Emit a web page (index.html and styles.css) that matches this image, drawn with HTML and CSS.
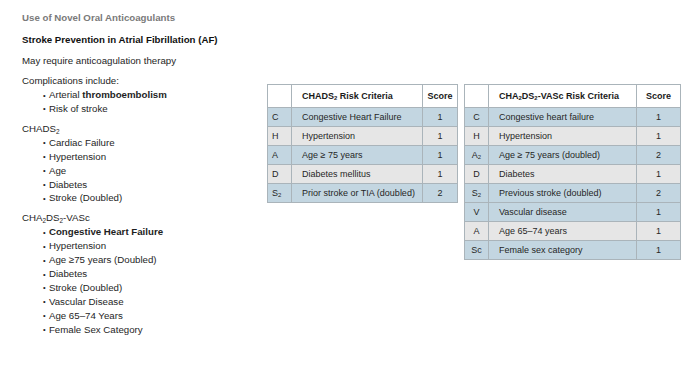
FILE: index.html
```html
<!DOCTYPE html>
<html lang="en">
<head>
<meta charset="utf-8">
<title>Use of Novel Oral Anticoagulants</title>
<link rel="stylesheet" href="styles.css">
</head>
<body>
<div class="page">
  <div class="notes">
    <div class="kicker">Use of Novel Oral Anticoagulants</div>
    <div class="heading">Stroke Prevention in Atrial Fibrillation (AF)</div>
    <p class="para">May require anticoagulation therapy</p>
    <div class="block">
      <div class="line">Complications include:</div>
      <ul class="bullets">
        <li>Arterial <b>thromboembolism</b></li>
        <li>Risk of stroke</li>
      </ul>
    </div>
    <div class="block">
      <div class="line">CHADS<sub>2</sub></div>
      <ul class="bullets">
        <li>Cardiac Failure</li>
        <li>Hypertension</li>
        <li>Age</li>
        <li>Diabetes</li>
        <li>Stroke (Doubled)</li>
      </ul>
    </div>
    <div class="block">
      <div class="line">CHA<sub>2</sub>DS<sub>2</sub>-VASc</div>
      <ul class="bullets">
        <li><b>Congestive Heart Failure</b></li>
        <li>Hypertension</li>
        <li>Age ≥75 years (Doubled)</li>
        <li>Diabetes</li>
        <li>Stroke (Doubled)</li>
        <li>Vascular Disease</li>
        <li>Age 65–74 Years</li>
        <li>Female Sex Category</li>
      </ul>
    </div>
  </div>
  <div class="tables">
    <table class="risk risk-chads">
      <colgroup><col class="c1"><col class="c2"><col class="c3"></colgroup>
      <thead>
        <tr><th></th><th class="crit">CHADS<sub>2</sub> Risk Criteria</th><th>Score</th></tr>
      </thead>
      <tbody>
        <tr class="blue"><td class="key">C</td><td class="crit">Congestive Heart Failure</td><td class="score">1</td></tr>
        <tr class="grey"><td class="key">H</td><td class="crit">Hypertension</td><td class="score">1</td></tr>
        <tr class="blue"><td class="key">A</td><td class="crit">Age ≥ 75 years</td><td class="score">1</td></tr>
        <tr class="grey"><td class="key">D</td><td class="crit">Diabetes mellitus</td><td class="score">1</td></tr>
        <tr class="blue"><td class="key">S<sub>2</sub></td><td class="crit">Prior stroke or TIA (doubled)</td><td class="score">2</td></tr>
      </tbody>
    </table>
    <table class="risk risk-vasc">
      <colgroup><col class="c1"><col class="c2"><col class="c3"></colgroup>
      <thead>
        <tr><th></th><th class="crit">CHA<sub>2</sub>DS<sub>2</sub>-VASc Risk Criteria</th><th>Score</th></tr>
      </thead>
      <tbody>
        <tr class="blue"><td class="key">C</td><td class="crit">Congestive heart failure</td><td class="score">1</td></tr>
        <tr class="grey"><td class="key">H</td><td class="crit">Hypertension</td><td class="score">1</td></tr>
        <tr class="blue"><td class="key">A<sub>2</sub></td><td class="crit">Age ≥ 75 years (doubled)</td><td class="score">2</td></tr>
        <tr class="grey"><td class="key">D</td><td class="crit">Diabetes</td><td class="score">1</td></tr>
        <tr class="blue"><td class="key">S<sub>2</sub></td><td class="crit">Previous stroke (doubled)</td><td class="score">2</td></tr>
        <tr class="blue"><td class="key">V</td><td class="crit">Vascular disease</td><td class="score">1</td></tr>
        <tr class="grey"><td class="key">A</td><td class="crit">Age 65–74 years</td><td class="score">1</td></tr>
        <tr class="blue"><td class="key">Sc</td><td class="crit">Female sex category</td><td class="score">1</td></tr>
      </tbody>
    </table>
  </div>
</div>
</body>
</html>
```
FILE: styles.css
```css
* { box-sizing: border-box; }

html, body {
  margin: 0;
  padding: 0;
  background: #ffffff;
}

body {
  font-family: "Liberation Sans", Arial, Helvetica, sans-serif;
  color: #1e1e1e;
  width: 700px;
  height: 375px;
  overflow: hidden;
}

.page {
  display: flex;
  align-items: flex-start;
  padding: 11px 0 0 22px;
}

.notes {
  width: 245px;
  flex: none;
  font-size: 9.7px;
  line-height: 14px;
}

.kicker {
  font-weight: bold;
  color: #7a7a7a;
  margin-bottom: 8px;
}

.heading {
  font-weight: bold;
  color: #111;
  margin-bottom: 7px;
}

.para {
  margin: 0 0 6px 0;
}

.block {
  margin-bottom: 6px;
}

.block sub,
.risk sub {
  font-size: 0.66em;
  line-height: 0;
  vertical-align: -0.25em;
}

.bullets {
  list-style: none;
  margin: 0;
  padding: 0;
}

.bullets li {
  line-height: 13.9px;
  padding-left: 27px;
  text-indent: -6px;
}

.bullets li::before {
  content: "•";
  font-size: 7.5px;
  line-height: 0;
  margin-right: 3.3px;
  vertical-align: 0.5px;
}

.tables {
  display: flex;
  align-items: flex-start;
  gap: 6px;
  margin-top: 73px;
}

.risk {
  border-collapse: collapse;
  table-layout: fixed;
  font-size: 9px;
  color: #262626;
}

.risk-chads { width: 190px; }
.risk-vasc { width: 216px; }

.risk-chads .c1 { width: 24px; }
.risk-chads .c2 { width: 131px; }
.risk-chads .c3 { width: 35px; }

.risk-vasc .c1 { width: 24px; }
.risk-vasc .c2 { width: 148px; }
.risk-vasc .c3 { width: 44px; }

.risk th,
.risk td {
  border: 1px solid #aab4ba;
  padding: 0;
  white-space: nowrap;
}

.risk th {
  height: 23px;
  font-weight: bold;
  color: #1a1a1a;
  text-align: center;
  background: #ffffff;
}

.risk td {
  height: 19px;
}

.risk th.crit,
.risk td.crit {
  text-align: left;
  padding-left: 10px;
}

.risk td.key {
  text-align: center;
}

.risk-chads td.key {
  text-align: left;
  padding-left: 4px;
}

.risk td.score {
  text-align: center;
}

.risk tr.blue td { background: #c3d6e1; }
.risk tr.grey td { background: #e6e6e6; }
```
